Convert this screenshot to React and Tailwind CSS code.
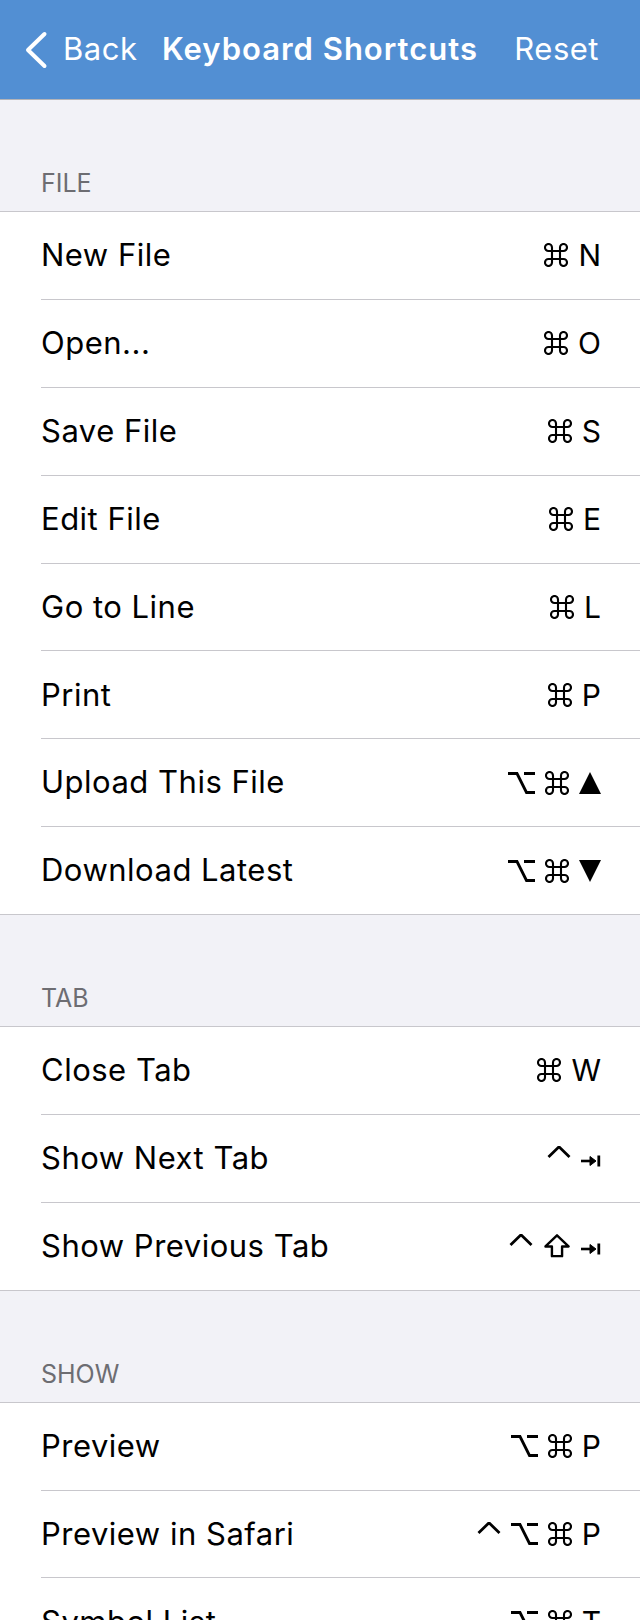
import React from "react";

const Cmd = () => (
  <svg width="24" height="24" viewBox="0 0 24 24" fill="none" stroke="black" strokeWidth="2.1">
    <path d="M8 4.5V19.5A3.5 3.5 0 1 1 4.5 16H19.5A3.5 3.5 0 1 1 16 19.5V4.5A3.5 3.5 0 1 1 19.5 8H4.5A3.5 3.5 0 1 1 8 4.5Z" />
  </svg>
);
const Opt = () => (
  <svg width="27" height="24" viewBox="0 0 27 24" fill="none" stroke="black" strokeWidth="2.8">
    <path d="M0 2.5H9L18.5 21.5H27M16 2.5H27" />
  </svg>
);
const Ctrl = () => (
  <svg width="24" height="24" viewBox="0 0 24 24" fill="none" stroke="black" strokeWidth="2.8">
    <path d="M1.5 11L12 0.8L22.5 11" />
  </svg>
);
const Up = () => (
  <svg width="22" height="24" viewBox="0 0 22 24" fill="black">
    <path d="M11 1L22 23H0Z" />
  </svg>
);
const Down = () => (
  <svg width="22" height="24" viewBox="0 0 22 24" fill="black">
    <path d="M0 1H22L11 23Z" />
  </svg>
);
const Shift = () => (
  <svg width="28" height="24" viewBox="0 0 28 26" fill="none" stroke="black" strokeWidth="2.6" strokeLinejoin="round">
    <path d="M14 1.5L26.5 13.5H19.5V24H8.5V13.5H1.5Z" />
  </svg>
);
const Tab = () => (
  <svg width="20" height="24" viewBox="0 0 20 24" fill="none" stroke="black">
    <path d="M0 15H13" strokeWidth="2.6" />
    <path d="M9 10.5L15 15L9 19.5Z" fill="black" strokeWidth="1" />
    <path d="M17.8 9.5V20.5" strokeWidth="2.8" />
  </svg>
);

const keyMap = { cmd: Cmd, opt: Opt, ctrl: Ctrl, up: Up, down: Down, shift: Shift, tab: Tab };

function Shortcut({ keys }) {
  return (
    <div className="flex items-center gap-[10px]">
      {keys.map((k, i) => {
        const C = keyMap[k];
        if (C) return <C key={i} />;
        return (
          <span key={i} className="text-[30px] leading-[36px] text-black">
            {k}
          </span>
        );
      })}
    </div>
  );
}

const sections = [
  {
    title: "FILE",
    rows: [
      ["New File", ["cmd", "N"]],
      ["Open...", ["cmd", "O"]],
      ["Save File", ["cmd", "S"]],
      ["Edit File", ["cmd", "E"]],
      ["Go to Line", ["cmd", "L"]],
      ["Print", ["cmd", "P"]],
      ["Upload This File", ["opt", "cmd", "up"]],
      ["Download Latest", ["opt", "cmd", "down"]],
    ],
  },
  {
    title: "TAB",
    rows: [
      ["Close Tab", ["cmd", "W"]],
      ["Show Next Tab", ["ctrl", "tab"]],
      ["Show Previous Tab", ["ctrl", "shift", "tab"]],
    ],
  },
  {
    title: "SHOW",
    rows: [
      ["Preview", ["opt", "cmd", "P"]],
      ["Preview in Safari", ["ctrl", "opt", "cmd", "P"]],
      ["Symbol List", ["opt", "cmd", "T"]],
      ["Line Numbers", ["opt", "cmd", "L"]],
    ],
  },
];

export default function App() {
  return (
    <div
      className="w-[640px] min-h-[1620px] bg-[#f2f2f7] overflow-hidden"
      style={{ fontFamily: "Inter, Roboto, 'Liberation Sans', sans-serif" }}
    >
      <header className="h-[100px] bg-[#528fd3] border-b border-[#b4b4b8] grid grid-cols-[1fr_auto_1fr] items-center text-white text-[31px] tracking-[0.5px]">
        <div className="flex items-center">
          <svg width="24" height="38" viewBox="0 0 24 38" fill="none" stroke="white" strokeWidth="4" strokeLinecap="round" strokeLinejoin="round" className="ml-[24px]">
            <path d="M20.5 3L4 19L20.5 35" />
          </svg>
          <span className="ml-[15px]">Back</span>
        </div>
        <div className="font-semibold tracking-[1px]">Keyboard Shortcuts</div>
        <div className="text-right pr-[41px]">Reset</div>
      </header>
      {sections.map((s) => (
        <section key={s.title}>
          <div className="h-[111px] flex items-end pl-[41px] pb-[13px]">
            <span className="text-[25px] leading-[30px] text-[#6d6d72]">{s.title}</span>
          </div>
          <div className="bg-white border-y border-[#c8c7cc]">
            {s.rows.map(([label, keys], i) => {
              const last = i === s.rows.length - 1;
              return (
                <div key={label} className="pl-[41px]">
                  <div
                    className={
                      "flex items-center justify-between pr-[39px] " +
                      (last ? "h-[86.875px]" : "h-[87.875px] border-b border-[#c8c7cc]")
                    }
                  >
                    <span className="text-[31px] tracking-[0.5px] text-black">{label}</span>
                    <Shortcut keys={keys} />
                  </div>
                </div>
              );
            })}
          </div>
        </section>
      ))}
    </div>
  );
}
